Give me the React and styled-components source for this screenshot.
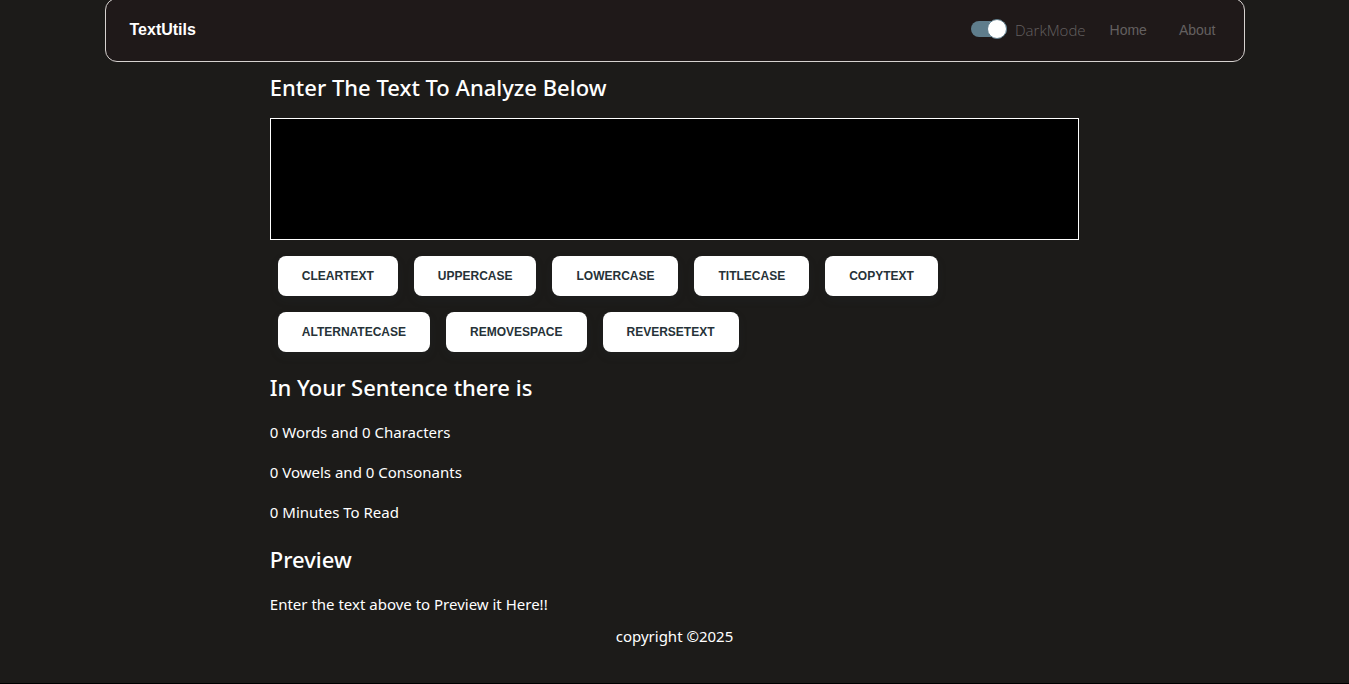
import React, { useState } from "react";
import styled, { createGlobalStyle } from "styled-components";

const sans = '"Noto Sans", "Open Sans", sans-serif';
const lightSans = '"Open Sans", "Noto Sans", sans-serif';
const arial = '"Liberation Sans", Arial, sans-serif';

const GlobalStyle = createGlobalStyle`
  *, *::before, *::after { box-sizing: border-box; }
  body {
    margin: 0;
    background: #1c1b19;
    color: #fff;
    font: 400 15px/24px ${sans};
  }
`;

const Page = styled.div`
  display: flex;
  flex-direction: column;
  min-height: 100vh;
  border-bottom: 1px solid #000;
`;

const Navbar = styled.nav`
  display: flex;
  align-items: center;
  justify-content: space-between;
  width: calc(100% - 32px);
  max-width: 1140px;
  height: 64px;
  margin: -2px auto 0;
  padding: 0 12px 0 24px;
  background: #1f1919;
  border: 1px solid #d6d2d0;
  border-radius: 12px;
`;

const Brand = styled.a`
  color: #fff;
  font: 700 16px/24px ${arial};
  text-decoration: none;
`;

const NavItems = styled.div`
  display: flex;
  align-items: center;
`;

const SwitchLabel = styled.label`
  display: flex;
  align-items: center;
  gap: 8px;
  padding-right: 8px;
  color: #646060;
  font-family: ${lightSans};
  font-weight: 300;
`;

const Switch = styled.input`
  appearance: none;
  display: flex;
  align-items: center;
  width: 36px;
  height: 16px;
  margin: 0 0 2px;
  border-radius: 8px;
  background: #5f7d8c;

  &::before {
    content: "";
    width: 20px;
    height: 20px;
    flex: none;
    margin-left: ${(p) => (p.checked ? "auto" : "0")};
    border: 1px solid #5f7d8c;
    border-radius: 50%;
    background: #fff;
  }
`;

const NavLink = styled.a`
  padding: 0 16px;
  color: #646060;
  font: 400 14px/24px ${arial};
  text-decoration: none;
`;

const Main = styled.main`
  width: 60%;
  margin: 0 auto;
  padding-top: 6px;
`;

const Heading = styled.h1`
  display: block;
  margin: 0 0 14px;
  font-size: 22px;
  font-weight: 500;
  line-height: 38px;
`;

const EditorHeading = styled(Heading)`
  margin-bottom: 12px;
`;

const Editor = styled.textarea`
  display: block;
  width: 100%;
  height: 122px;
  padding: 8px;
  border: 1px solid #fff;
  background: #000;
  color: #fff;
  font: inherit;
  resize: none;
  outline: none;
`;

const Actions = styled.div`
  display: flex;
  flex-wrap: wrap;
  gap: 16px;
  max-width: 720px;
  padding: 16px 8px;
`;

const ActionButton = styled.button`
  height: 40px;
  padding: 0 24px;
  border: 0;
  border-radius: 8px;
  background: #fff;
  color: #263238;
  box-shadow: 0 4px 8px rgba(38, 50, 56, 0.2);
  font: 700 12px/16px ${arial};
  text-transform: uppercase;
`;

const Text = styled.p`
  margin: 0 0 16px;
`;

const Footer = styled.footer`
  margin-top: -8px;
  text-align: center;
`;

const title = (s) => s.toLowerCase().replace(/\b\w/g, (c) => c.toUpperCase());
const alternate = (s) =>
  [...s].map((c, i) => (i % 2 ? c.toUpperCase() : c.toLowerCase())).join("");

const actions = [
  ["ClearText", () => ""],
  ["UpperCase", (s) => s.toUpperCase()],
  ["LowerCase", (s) => s.toLowerCase()],
  ["TitleCase", title],
  ["CopyText", (s) => { navigator.clipboard?.writeText(s); return s; }],
  ["AlternateCase", alternate],
  ["RemoveSpace", (s) => s.replace(/\s+/g, " ").trim()],
  ["ReverseText", (s) => [...s].reverse().join("")],
];

export default function App() {
  const [text, setText] = useState("");
  const [dark, setDark] = useState(true);
  const words = text.split(/\s+/).filter(Boolean).length;
  const vowels = (text.match(/[aeiou]/gi) || []).length;
  const consonants = (text.match(/[b-df-hj-np-tv-z]/gi) || []).length;

  return (
    <Page>
      <GlobalStyle />
      <Navbar>
        <Brand href="#">TextUtils</Brand>
        <NavItems>
          <SwitchLabel>
            <Switch type="checkbox" checked={dark} onChange={(e) => setDark(e.target.checked)} />
            DarkMode
          </SwitchLabel>
          <NavLink href="#home">Home</NavLink>
          <NavLink href="#about">About</NavLink>
        </NavItems>
      </Navbar>
      <Main>
        <EditorHeading as="label" htmlFor="editor">Enter The Text To Analyze Below</EditorHeading>
        <Editor id="editor" value={text} onChange={(e) => setText(e.target.value)} />
        <Actions>
          {actions.map(([name, run]) => (
            <ActionButton key={name} type="button" onClick={() => setText(run(text))}>
              {name}
            </ActionButton>
          ))}
        </Actions>
        <Heading as="h2">In Your Sentence there is</Heading>
        <Text>{`${words} Words and ${text.length} Characters`}</Text>
        <Text>{`${vowels} Vowels and ${consonants} Consonants`}</Text>
        <Text>{`${Math.round(words * 0.008)} Minutes To Read`}</Text>
        <Heading as="h2">Preview</Heading>
        <Text>{text || "Enter the text above to Preview it Here!!"}</Text>
      </Main>
      <Footer>copyright ©2025</Footer>
    </Page>
  );
}
